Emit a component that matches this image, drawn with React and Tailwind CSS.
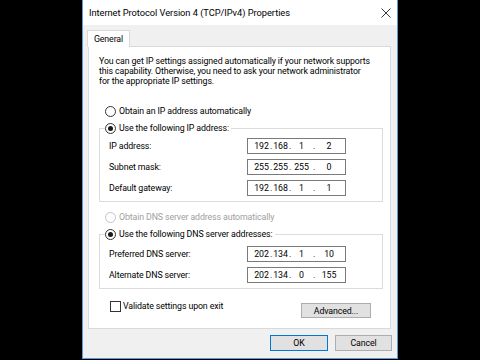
import React from 'react';

const cellW = ['w-[15px]', 'w-[15px]', 'w-[19px]', 'w-[24px]'];
const dotW = ['w-[4px]', 'w-[4px]', 'w-[6px]'];

const Radio = ({ checked, disabled }) => (
  <span
    className={`w-[11px] h-[11px] rounded-full border bg-white flex items-center justify-center shrink-0 ${
      disabled ? 'border-[#c4c4c4]' : 'border-[#333333]'
    }`}
  >
    {checked && <span className="w-[5px] h-[5px] rounded-full bg-[#1a1a1a]" />}
  </span>
);

const IpBox = ({ parts }) => (
  <div className="w-[99px] h-[16px] border border-[#7a7a7a] bg-white flex items-center pl-[6px] leading-[14px]">
    {parts.map((p, i) => (
      <React.Fragment key={i}>
        {i > 0 && <span className={`${dotW[i - 1]} flex justify-center`}>.</span>}
        <span className={`${cellW[i]} text-center`}>{p}</span>
      </React.Fragment>
    ))}
  </div>
);

const Row = ({ label, parts }) => (
  <div className="flex items-center h-[16px] pl-[9px]">
    <span className="w-[138px]">{label}</span>
    <IpBox parts={parts} />
  </div>
);

const Group = ({ title, children, pad }) => (
  <fieldset className="w-[284px] border border-[#dcdcdc]">
    <legend className="ml-[5px] pr-[2px]">
      <span className="flex items-center gap-[3px] h-[12px]">
        <Radio checked />
        <span>{title}</span>
      </span>
    </legend>
    <div className={`flex flex-col gap-[5px] pb-[5px] ${pad}`}>{children}</div>
  </fieldset>
);

const Button = ({ children, primary, className = '' }) => (
  <button
    className={`flex items-center justify-center bg-[#e1e1e1] border ${
      primary ? 'border-[#0078d7]' : 'border-[#adadad]'
    } ${className}`}
  >
    {children}
  </button>
);

export default function App() {
  return (
    <div className="w-[480px] h-[360px] bg-black flex justify-center font-['Roboto',sans-serif] text-[8.8px] tracking-[-0.12px] leading-[12px] text-black whitespace-nowrap">
      <div className="w-[316px] h-[359px] bg-[#f0f0f0] border-x border-b border-[#5a9bd8] flex flex-col overflow-hidden">
        {/* Title bar */}
        <div className="h-[25px] bg-white flex items-center justify-between pl-[6px] pr-[6px] shrink-0">
          <span className="text-[9.3px] tracking-[-0.05px]">Internet Protocol Version 4 (TCP/IPv4) Properties</span>
          <svg width="10" height="10" viewBox="0 0 10 10">
            <path d="M0.5 0.5 L9.5 9.5 M9.5 0.5 L0.5 9.5" stroke="#222" strokeWidth="0.9" fill="none" />
          </svg>
        </div>

        {/* Tab */}
        <div className="mt-[5px] flex shrink-0">
          <div className="ml-[4px] w-[43px] h-[17px] -mb-[1px] relative z-10 bg-white border-x border-t border-[#d9d9d9] flex items-center justify-center">
            General
          </div>
        </div>

        {/* Panel */}
        <div className="ml-[5px] w-[303px] h-[283px] shrink-0 bg-white border border-[#d9d9d9] px-[10px] pt-[9px] flex flex-col">
          <p className="leading-[10px]">
            You can get IP settings assigned automatically if your network supports
            <br />
            this capability. Otherwise, you need to ask your network administrator
            <br />
            for the appropriate IP settings.
          </p>

          <div className="mt-[19px] ml-[6px] h-[12px] flex items-center gap-[3px]">
            <Radio />
            <span>Obtain an IP address automatically</span>
          </div>

          <div className="mt-[5px]">
            <Group title="Use the following IP address:" pad="pt-[4px]">
              <Row label="IP address:" parts={['192', '168', '1', '2']} />
              <Row label="Subnet mask:" parts={['255', '255', '255', '0']} />
              <Row label="Default gateway:" parts={['192', '168', '1', '1']} />
            </Group>
          </div>

          <div className="mt-[9px] ml-[6px] h-[12px] flex items-center gap-[3px] text-[#a0a0a0]">
            <Radio disabled />
            <span>Obtain DNS server address automatically</span>
          </div>

          <div className="mt-[5px]">
            <Group title="Use the following DNS server addresses:" pad="pt-[6px]">
              <Row label="Preferred DNS server:" parts={['202', '134', '1', '10']} />
              <Row label="Alternate DNS server:" parts={['202', '134', '0', '155']} />
            </Group>
          </div>

          <div className="mt-[11px] flex items-start justify-between pr-[9px]">
            <div className="ml-[11px] h-[12px] flex items-center gap-[2px]">
              <span className="w-[11px] h-[11px] border border-[#333333] bg-white shrink-0" />
              <span>Validate settings upon exit</span>
            </div>
            <Button className="mt-[3px] w-[70px] h-[15px]">Advanced...</Button>
          </div>
        </div>

        {/* Footer buttons */}
        <div className="mt-[6px] flex justify-end gap-[7px] pr-[5px]">
          <Button primary className="w-[58px] h-[16px]">OK</Button>
          <Button className="w-[57px] h-[16px]">Cancel</Button>
        </div>
      </div>
    </div>
  );
}
